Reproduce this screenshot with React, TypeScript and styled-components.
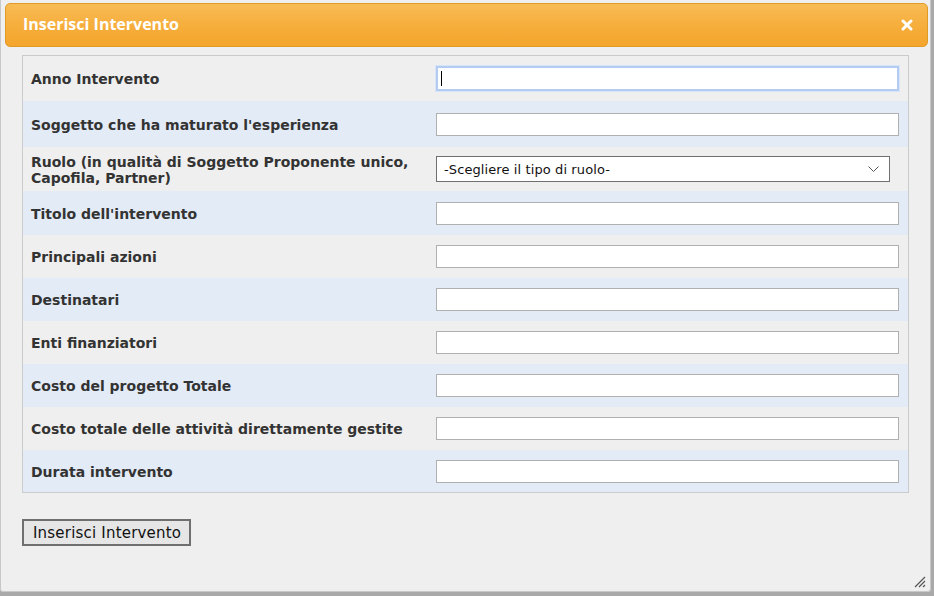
import React from "react";
import styled, { createGlobalStyle } from "styled-components";

const Global = createGlobalStyle`
  html, body { margin: 0; padding: 0; }
  body {
    background: #a9a9a9;
    width: 934px;
    height: 596px;
    overflow: hidden;
    font-family: "DejaVu Sans", Verdana, sans-serif;
  }
`;

const Dialog = styled.div`
  box-sizing: border-box;
  width: 931px;
  height: 592px;
  background: #efefef;
  border: 1px solid #c8c8c8;
  border-top: none;
  border-radius: 0 0 3px 3px;
  padding: 3px 2px 0 4px;
  position: relative;
  display: flex;
  flex-direction: column;
`;

const Header = styled.div`
  box-sizing: border-box;
  height: 44px;
  border: 1px solid #e09a26;
  border-radius: 5px;
  background: linear-gradient(to bottom, #f8bb55 0%, #f6ad3a 55%, #f4a52c 100%);
  display: flex;
  align-items: center;
  justify-content: space-between;
  padding: 0 13px 0 17px;
`;

const Title = styled.span`
  color: #ffffff;
  font-family: "Open Sans", "Liberation Sans", sans-serif;
  font-weight: 700;
  font-size: 16px;
  margin-top: -2px;
`;

const Close = styled.button`
  border: none;
  background: transparent;
  padding: 0;
  width: 14px;
  height: 14px;
  display: flex;
  align-items: center;
  justify-content: center;
  cursor: pointer;
`;

const Body = styled.div`
  padding: 8px 19px 0 17px;
  display: flex;
  flex-direction: column;
`;

const Panel = styled.div`
  border: 1px solid #cbcbcb;
  display: flex;
  flex-direction: column;
`;

const Row = styled.div<{ $alt: boolean; $h: number }>`
  display: grid;
  grid-template-columns: 413px 1fr;
  align-items: center;
  height: ${(p) => p.$h}px;
  background: ${(p) => (p.$alt ? "#e3ebf7" : "#efefef")};
`;

const Label = styled.label`
  padding-left: 8px;
  padding-top: 1px;
  color: #333333;
  font-family: "DejaVu Sans", Verdana, sans-serif;
  font-weight: 700;
  font-size: 14px;
  line-height: 16px;
`;

const Input = styled.input<{ $focus?: boolean }>`
  box-sizing: border-box;
  width: 463px;
  height: ${(p) => (p.$focus ? 25 : 23)}px;
  margin: 0;
  background: #ffffff;
  border: ${(p) => (p.$focus ? "2px solid #b5ccf2" : "1px solid #b0b0b0")};
  outline: ${(p) => (p.$focus ? "1px solid #d8e4f8" : "none")};
  padding: 0 4px;
  font-family: "DejaVu Sans", sans-serif;
  font-size: 13px;
  color: #000;
`;

const Caret = styled.span`
  position: absolute;
  left: 5px;
  top: 5px;
  width: 1px;
  height: 15px;
  background: #000;
`;

const InputWrap = styled.div`
  position: relative;
  width: 463px;
`;

const SelectBox = styled.div`
  box-sizing: border-box;
  width: 454px;
  height: 26px;
  background: #ffffff;
  border: 1px solid #707070;
  display: flex;
  align-items: center;
  justify-content: space-between;
  padding: 0 10px 0 7px;
  font-family: "DejaVu Sans", sans-serif;
  font-size: 13px;
  letter-spacing: 0.1px;
  color: #111;
`;

const Footer = styled.div`
  padding-top: 26px;
`;

const Button = styled.button`
  box-sizing: border-box;
  height: 27px;
  padding: 0 8px 0 9px;
  background: #e6e6e6;
  border: 2px solid #6f6f6f;
  font-family: "DejaVu Sans", sans-serif;
  font-size: 15px;
  letter-spacing: 0.2px;
  color: #111;
  cursor: pointer;
`;

const Grip = styled.div`
  position: absolute;
  right: 4px;
  bottom: 4px;
  width: 14px;
  height: 14px;
`;

type Field = { label: React.ReactNode; kind: "input" | "focus" | "select"; h: number };

const fields: Field[] = [
  { label: "Anno Intervento", kind: "focus", h: 45 },
  { label: "Soggetto che ha maturato l'esperienza", kind: "input", h: 46 },
  {
    label: (
      <>
        Ruolo (in qualità di Soggetto Proponente unico,
        <br />
        Capofila, Partner)
      </>
    ),
    kind: "select",
    h: 44,
  },
  { label: "Titolo dell'intervento", kind: "input", h: 44 },
  { label: "Principali azioni", kind: "input", h: 43 },
  { label: "Destinatari", kind: "input", h: 43 },
  { label: "Enti finanziatori", kind: "input", h: 43 },
  { label: "Costo del progetto Totale", kind: "input", h: 43 },
  { label: "Costo totale delle attività direttamente gestite", kind: "input", h: 43 },
  { label: "Durata intervento", kind: "input", h: 42 },
];

export default function App() {
  return (
    <>
      <Global />
      <Dialog>
        <Header>
          <Title>Inserisci Intervento</Title>
          <Close aria-label="chiudi">
            <svg width="12" height="12" viewBox="0 0 12 12">
              <path d="M2 2 L10 10 M10 2 L2 10" stroke="#ffffff" strokeWidth="3" strokeLinecap="round" />
            </svg>
          </Close>
        </Header>
        <Body>
          <Panel>
            {fields.map((f, i) => (
              <Row key={i} $alt={i % 2 === 1} $h={f.h}>
                <Label>{f.label}</Label>
                {f.kind === "select" ? (
                  <SelectBox>
                    <span>-Scegliere il tipo di ruolo-</span>
                    <svg width="11" height="7" viewBox="0 0 11 7">
                      <path d="M0.5 0.5 L5.5 5.5 L10.5 0.5" fill="none" stroke="#555" strokeWidth="1" />
                    </svg>
                  </SelectBox>
                ) : f.kind === "focus" ? (
                  <InputWrap>
                    <Input $focus type="text" />
                    <Caret />
                  </InputWrap>
                ) : (
                  <Input type="text" />
                )}
              </Row>
            ))}
          </Panel>
          <Footer>
            <Button>Inserisci Intervento</Button>
          </Footer>
        </Body>
        <Grip>
          <svg width="14" height="14" viewBox="0 0 14 14">
            <path d="M13 3 L3 13 M13 7 L7 13 M13 11 L11 13" stroke="#555" strokeWidth="1.2" />
          </svg>
        </Grip>
      </Dialog>
    </>
  );
}
